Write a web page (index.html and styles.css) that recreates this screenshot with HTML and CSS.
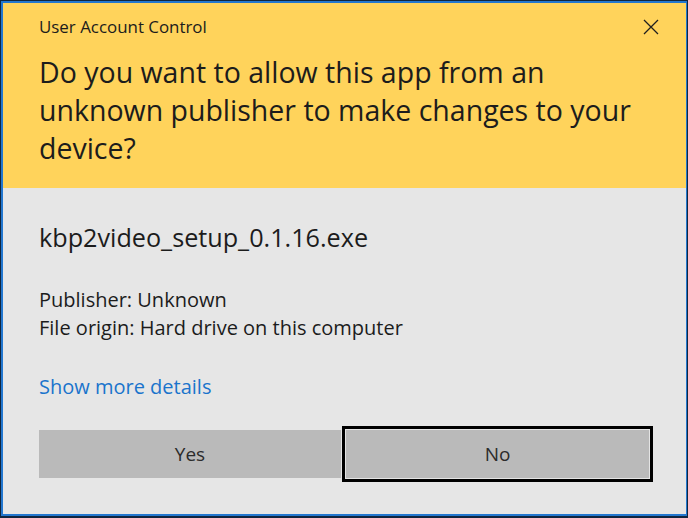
FILE: index.html
```html
<!DOCTYPE html>
<html>
<head>
<meta charset="utf-8">
<link rel="stylesheet" href="styles.css">
</head>
<body>
<div class="window">
  <div class="frame">
    <div class="header">
      <div class="caption-row">
        <span class="caption">User Account Control</span>
        <svg class="close" width="16" height="16" viewBox="0 0 16 16"><path d="M1 1 L15 15 M15 1 L1 15" stroke="#1f1f1f" stroke-width="1.3" fill="none"/></svg>
      </div>
      <div class="title">Do you want to allow this app from an unknown publisher to make changes to your device?</div>
    </div>
    <div class="content">
      <div class="filename">kbp2video_setup_0.1.16.exe</div>
      <div class="info">
        <div>Publisher: Unknown</div>
        <div>File origin: Hard drive on this computer</div>
      </div>
      <div class="link">Show more details</div>
      <div class="buttons">
        <div class="btn yes">Yes</div>
        <div class="btn no">No</div>
      </div>
    </div>
  </div>
</div>
</body>
</html>
```
FILE: styles.css
```css
html, body {
  margin: 0;
  padding: 0;
}
body {
  width: 688px;
  height: 518px;
  font-family: "Open Sans", "Noto Sans", sans-serif;
  background: #0f2a47;
}
.window {
  width: 688px;
  height: 518px;
  box-sizing: border-box;
  border: 1px solid #10263f;
  border-bottom-width: 2px;
}
.frame {
  height: 100%;
  box-sizing: border-box;
  border-style: solid;
  border-color: #2377cf;
  border-width: 2px 1px 2px 2px;
  display: flex;
  flex-direction: column;
}
.header {
  background: #ffd35b;
  height: 185px;
  box-sizing: border-box;
  padding: 13px 27px 0 36px;
  color: #1c1c1c;
}
.caption-row {
  display: flex;
  justify-content: space-between;
  align-items: center;
  height: 22px;
}
.caption {
  font-size: 16.9px;
  line-height: 22px;
}
.close {
  display: block;
}
.title {
  margin-top: 15px;
  width: 606px;
  font-size: 28.5px;
  line-height: 38px;
}
.content {
  flex: 1;
  background: #e6e6e6;
  padding: 33px 33px 0 36px;
  color: #1c1c1c;
}
.filename {
  font-size: 25.2px;
  line-height: 32px;
}
.info {
  margin-top: 33px;
  font-size: 20px;
  line-height: 28px;
}
.link {
  margin-top: 31px;
  font-size: 20px;
  line-height: 28px;
  color: #1a74cc;
}
.buttons {
  margin-top: 25px;
  display: flex;
  align-items: center;
  gap: 1px;
  height: 56px;
}
.btn {
  box-sizing: border-box;
  background: #bababa;
  color: #2b2b2b;
  font-size: 19px;
  display: flex;
  align-items: center;
  justify-content: center;
}
.yes {
  width: 302px;
  height: 48px;
}
.no {
  width: 311px;
  height: 56px;
  border: 3px solid #000;
  box-shadow: inset 0 0 0 1px #e4e4e4;
}
```
